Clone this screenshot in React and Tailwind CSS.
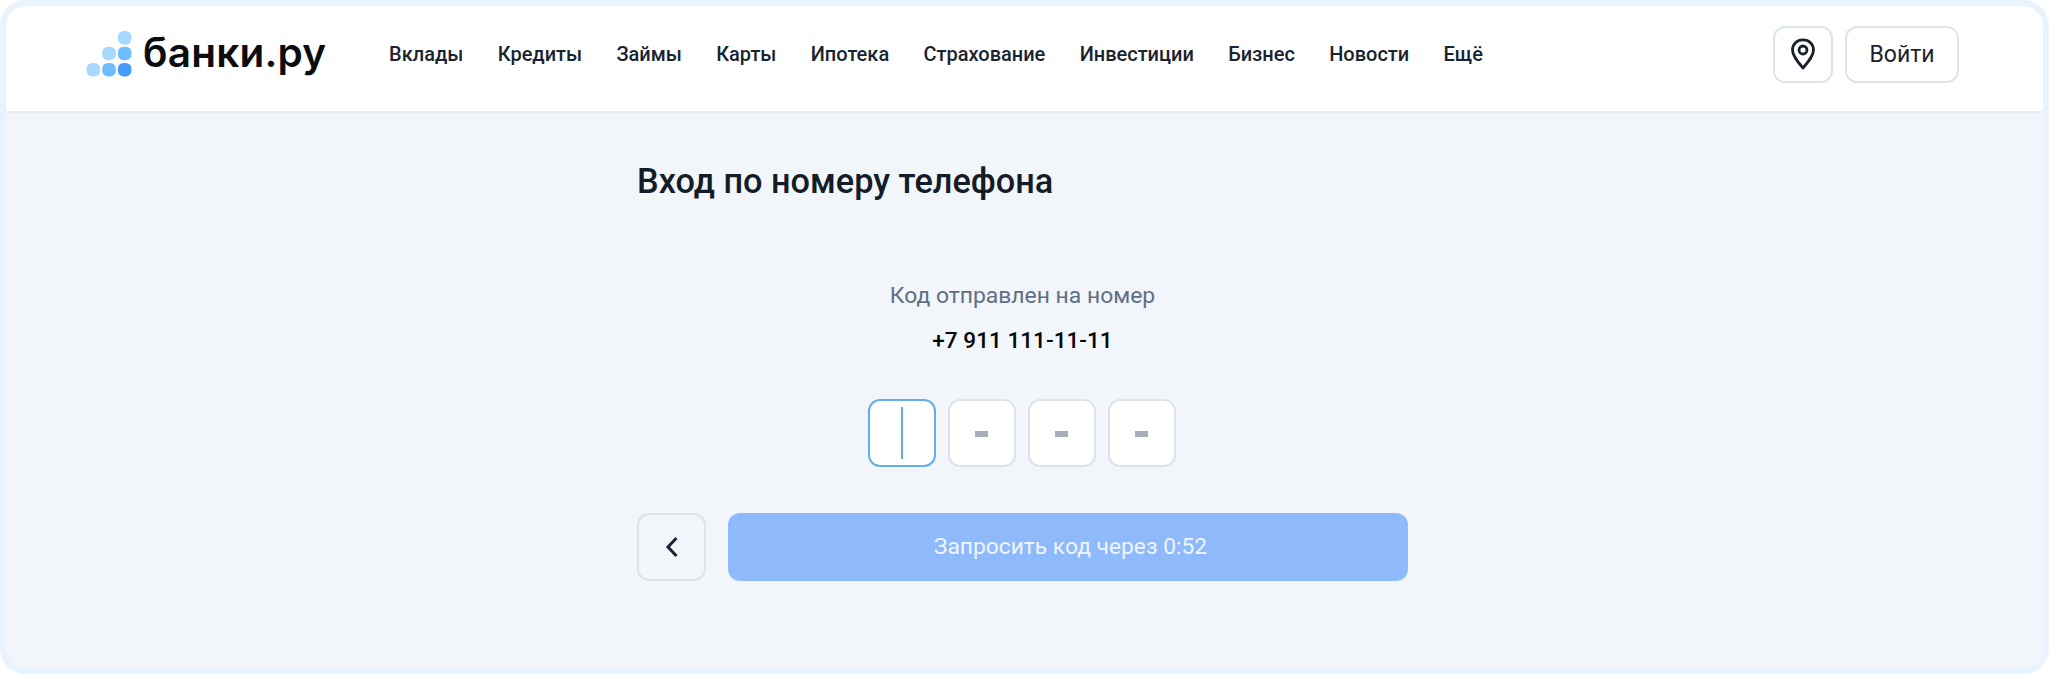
import React from "react";

const nav = ["Вклады", "Кредиты", "Займы", "Карты", "Ипотека", "Страхование", "Инвестиции", "Бизнес", "Новости", "Ещё"];

function LogoMark() {
  const dots = [
    [57.5, 6.5, "#a6d9fd"],
    [57.5, 21.5, "#6ebdfd"],
    [42.5, 21.5, "#a6d9fd"],
    [57.5, 37, "#459bfb"],
    [42.5, 37, "#6ebdfd"],
    [27.5, 37, "#a6d9fd"],
  ];
  return (
    <svg width="46" height="46" viewBox="21 0 43 44" className="block shrink-0">
      {dots.map(([x, y, c], i) => (
        <rect key={i} x={x - 6.5} y={y - 6.5} width="13" height="13" rx="5.5" fill={c} />
      ))}
    </svg>
  );
}

export default function App() {
  return (
    <div className="w-[2049px] h-[674px] bg-white overflow-hidden font-['Roboto',sans-serif]">
      <div className="w-full h-full border-[6px] border-[#e8f3fe] rounded-[26px] overflow-hidden bg-[#f2f5fa] flex flex-col">
        <header className="h-[107px] shrink-0 bg-white border-b-2 border-[#e9edf4] flex items-center pl-[80px] pr-[84px] pb-[10px]">
          <div className="flex items-center gap-[11px] w-[303px] shrink-0">
            <LogoMark />
            <span className="font-['Inter',sans-serif] font-semibold text-[40.5px] leading-none text-[#0b0d10] tracking-[0.2px]">банки.ру</span>
          </div>
          <nav className="flex items-center gap-[34.3px] text-[20px] font-medium text-[#1a2430]">
            {nav.map((t) => (
              <a key={t}>{t}</a>
            ))}
          </nav>
          <div className="ml-auto mt-[1px] flex items-center gap-[12px]">
            <button className="w-[60px] h-[57px] rounded-[12px] border-2 border-[#dde4ee] flex items-center justify-center">
              <svg width="26" height="32" viewBox="0 0 26 32" fill="none" stroke="#17202b" strokeWidth="2.8" strokeLinejoin="round">
                <path d="M13 30 C8 24 2.5 18 2.5 12 C2.5 6 7 1.8 13 1.8 C19 1.8 23.5 6 23.5 12 C23.5 18 18 24 13 30 Z" />
                <circle cx="13" cy="12" r="4" />
              </svg>
            </button>
            <button className="w-[114px] h-[57px] pt-[2px] rounded-[12px] border-2 border-[#dde4ee] text-[23px] text-[#1a2430]">Войти</button>
          </div>
        </header>
        <main className="w-[771px] ml-[631px] flex flex-col">
          <h1 className="mt-[48px] text-[34.3px] leading-[40px] font-medium text-[#141c26]">Вход по номеру телефона</h1>
          <p className="mt-[81px] text-center text-[22.9px] leading-[28px] text-[#5f6f83]">Код отправлен на номер</p>
          <p className="mt-[17px] text-center text-[22.6px] leading-[28px] font-medium text-[#050608]">+7 911 111-11-11</p>
          <div className="mt-[44px] pr-[2px] flex justify-center gap-[12px]">
            <div className="w-[68px] h-[68px] rounded-[12px] bg-white border-2 border-[#64aeea] flex items-center justify-center">
              <div className="w-[2px] h-[52px] bg-[#64aeea]" />
            </div>
            {[0, 1, 2].map((i) => (
              <div key={i} className="w-[68px] h-[68px] rounded-[12px] bg-white border-2 border-[#dfe2ea] flex items-center justify-center">
                <div className="w-[13px] h-[6px] mt-[2px] bg-[#a8adb9]" />
              </div>
            ))}
          </div>
          <div className="mt-[46px] flex gap-[22px]">
            <button className="w-[69px] h-[68px] rounded-[12px] border-2 border-[#dfe2ea] flex items-center justify-center">
              <svg width="14" height="22" viewBox="0 0 14 22" fill="none" stroke="#1a2333" strokeWidth="3">
                <path d="M11.5 2 L3 11 L11.5 20" />
              </svg>
            </button>
            <button className="flex-1 h-[68px] pl-[5px] rounded-[12px] bg-[#8eb9fa] text-[22.8px] text-[#eef5ff]">Запросить код через 0:52</button>
          </div>
        </main>
      </div>
    </div>
  );
}
